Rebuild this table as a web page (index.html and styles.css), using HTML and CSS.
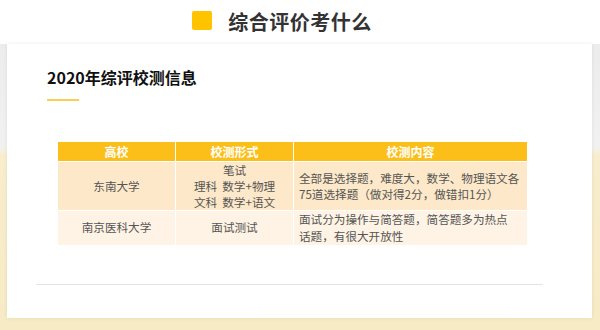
FILE: index.html
```html
<!DOCTYPE html>
<html lang="zh">
<head>
<meta charset="utf-8">
<link rel="stylesheet" href="styles.css">
</head>
<body>
<div class="page">
  <header class="top">
    <span class="mark"></span>
    <h1 class="title">综合评价考什么</h1>
  </header>
  <section class="card">
    <h2 class="sub">2020年综评校测信息</h2>
    <div class="bar"></div>
    <table class="info">
      <colgroup><col class="c1"><col class="c2"><col class="c3"></colgroup>
      <thead>
        <tr><th>高校</th><th>校测形式</th><th>校测内容</th></tr>
      </thead>
      <tbody>
        <tr class="r1">
          <td>东南大学</td>
          <td>笔试<br>理科&nbsp;&nbsp;数学+物理<br>文科&nbsp;&nbsp;数学+语文</td>
          <td class="left">全部是选择题，难度大，数学、物理语文各<br>75道选择题（做对得2分，做错扣1分）</td>
        </tr>
        <tr class="r2">
          <td>南京医科大学</td>
          <td>面试测试</td>
          <td class="left">面试分为操作与简答题，简答题多为热点<br>话题，有很大开放性</td>
        </tr>
      </tbody>
    </table>
    <div class="rule"></div>
  </section>
</div>
</body>
</html>
```
FILE: styles.css
```css
html, body {
  margin: 0;
  padding: 0;
}
body {
  width: 600px;
  height: 330px;
  overflow: hidden;
  font-family: "Noto Sans CJK SC", "Noto Sans", sans-serif;
}
.page {
  height: 330px;
  box-sizing: border-box;
  padding: 0 8px 12px 7px;
  background: linear-gradient(to bottom, #ffffff 0, #ffffff 36px, #ececec 42px, #f1f1f1 146px, #f8edcc 156px, #f7ebc6 330px);
}
.top {
  height: 44px;
  display: flex;
  align-items: center;
  justify-content: center;
  padding-right: 36px;
  box-sizing: border-box;
  background: #fff;
  margin: 0 -8px 0 -7px;
}
.mark {
  width: 20px;
  height: 19px;
  background: #ffc300;
  border-radius: 2px;
  margin-right: 16px;
  margin-top: -3px;
}
.title {
  margin: 0;
  font-size: 20px;
  font-weight: 700;
  color: #333;
  letter-spacing: 0.5px;
  line-height: 28px;
}
.card {
  height: 274px;
  background: #fff;
  box-shadow: 0 0 4px rgba(0,0,0,0.08);
  box-sizing: border-box;
  padding-top: 22px;
  display: flex;
  flex-direction: column;
}
.sub {
  margin: 0 0 0 40px;
  font-size: 16px;
  font-weight: 700;
  color: #111;
  line-height: 23px;
}
.bar {
  margin: 10px 0 0 40px;
  width: 32px;
  height: 2px;
  background: #f7cf55;
}
.info {
  margin: 41px 0 0 50px;
  width: 470px;
  border-collapse: collapse;
  table-layout: fixed;
  font-size: 11.6px;
  color: #555;
}
.c1 { width: 118px; }
.c2 { width: 118px; }
.c3 { width: 234px; }
.info th, .info td {
  border: 1px solid #fff;
  text-align: center;
  vertical-align: middle;
  padding: 0;
}
.info th {
  background: #fcbf1a;
  color: #fff;
  font-weight: 700;
  height: 19px;
  line-height: 19px;
  font-size: 12px;
  border-top: none;
}
.info td.left {
  text-align: left;
  padding-left: 5px;
}
.r1 td {
  background: #fde8c9;
  height: 47px;
  line-height: 16px;
}
.r2 td {
  background: #fef3e4;
  height: 32px;
  line-height: 16.8px;
}
.rule {
  margin: 38px 0 0 29px;
  width: 507px;
  height: 1px;
  background: #e4e4e4;
}
```
